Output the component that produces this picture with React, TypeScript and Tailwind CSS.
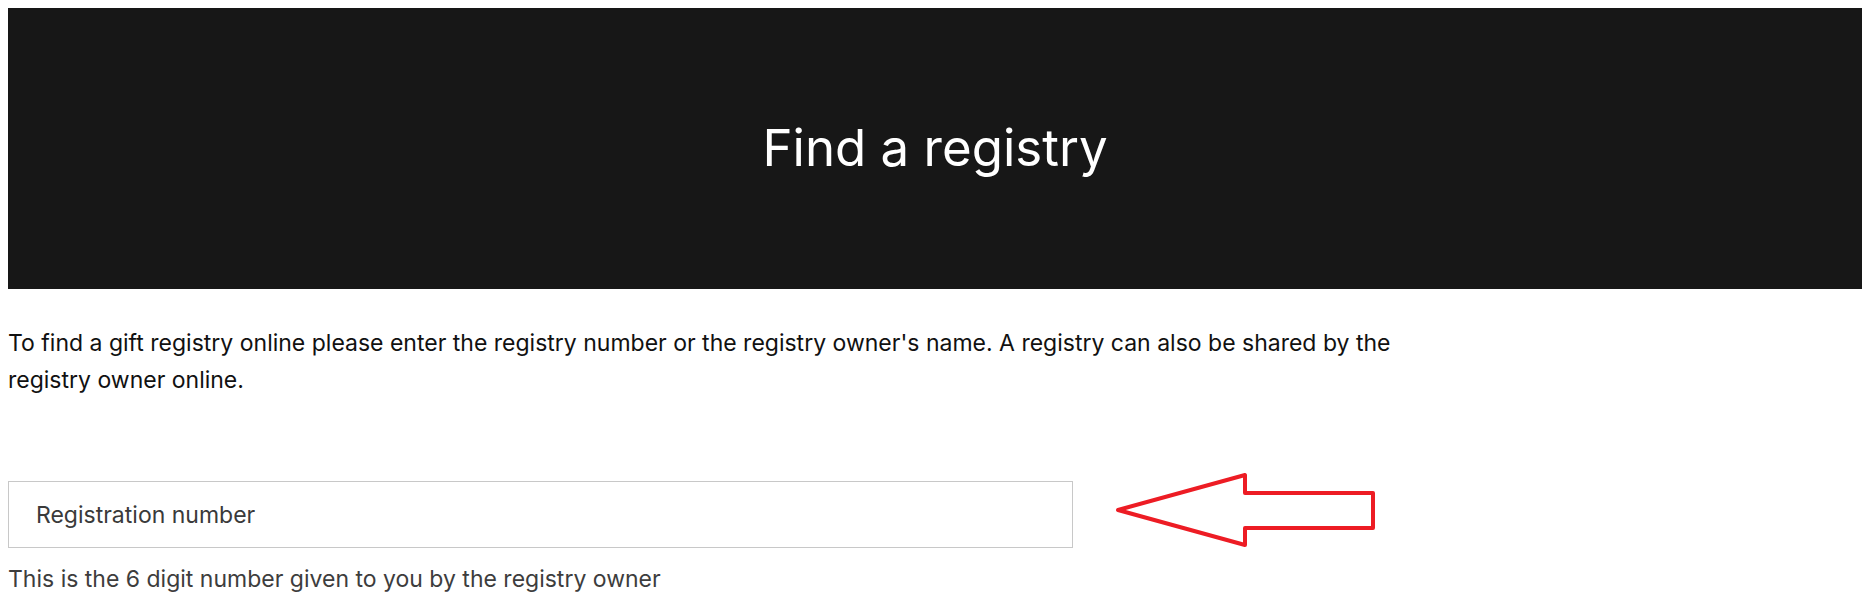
const fontStack = { fontFamily: '"Inter", "Noto Sans", sans-serif' };

function Arrow() {
  return (
    <svg width="265" height="76" viewBox="0 0 265 76" className="-mt-[9px] shrink-0">
      <polygon
        points="5,38 132,3 132,21 260,21 260,56 132,56 132,73"
        fill="none"
        stroke="#ed1c24"
        strokeWidth="4"
        strokeLinejoin="round"
      />
    </svg>
  );
}

export default function App() {
  return (
    <div className="min-h-screen bg-white pl-2 pr-[5px] pt-2 font-['Inter',_'Noto_Sans',_sans-serif]">
      <header className="flex h-[281px] items-center justify-center bg-[#171717]">
        <h1 className="text-[51px] font-normal text-white">Find a registry</h1>
      </header>

      <p className="mt-[36px] max-w-[1410px] text-[23px] leading-[37px] text-[#111]">
        To find a gift registry online please enter the registry number or the registry owner's name. A
        registry can also be shared by the registry owner online.
      </p>

      <div className="mt-[82px] flex items-start gap-[40px]">
        <input
          type="text"
          placeholder="Registration number"
          className="h-[67px] w-[1065px] border border-[#c8c8c8] px-[27px] text-[23px] text-[#333] outline-none placeholder:text-[#3a3a3a]"
          style={fontStack}
        />
        <Arrow />
      </div>

      <p className="mt-[16px] text-[23px] leading-[31px] text-[#3d3d3d]">
        This is the 6 digit number given to you by the registry owner
      </p>
    </div>
  );
}
